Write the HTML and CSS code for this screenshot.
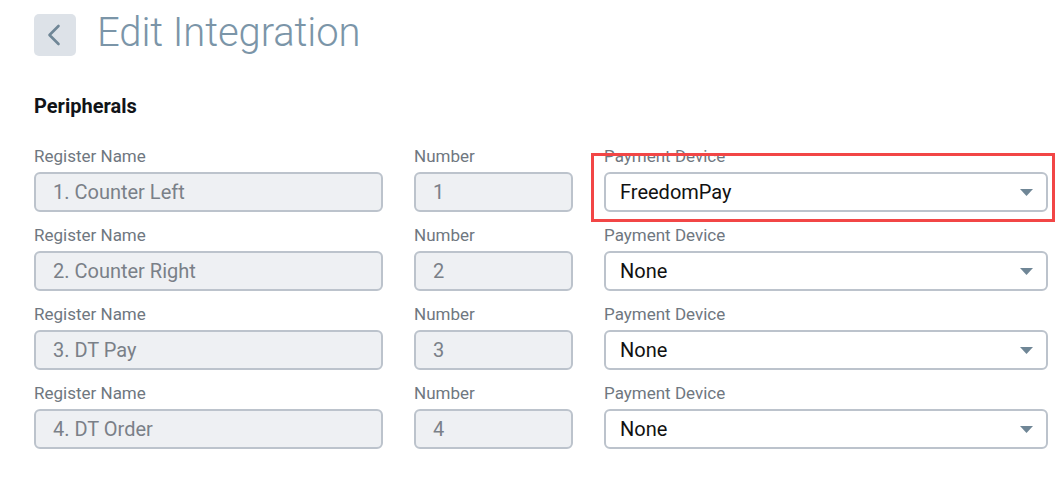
FILE: index.html
```html
<!DOCTYPE html>
<html lang="en">
<head>
<meta charset="utf-8">
<title>Edit Integration</title>
<link rel="stylesheet" href="styles.css">
</head>
<body>
<div class="page">
  <header class="header">
    <button class="back" aria-label="Back">
      <svg width="42" height="42" viewBox="0 0 42 42"><polyline points="24.5,12 15.5,21 24.5,30" fill="none" stroke="#6f8696" stroke-width="2.6" stroke-linecap="round" stroke-linejoin="round"/></svg>
    </button>
    <h1 class="title">Edit Integration</h1>
  </header>

  <h2 class="section">Peripherals</h2>

  <div class="grid">
    <div class="field">
      <label class="label">Register Name</label>
      <div class="input">1. Counter Left</div>
    </div>
    <div class="field">
      <label class="label">Number</label>
      <div class="input">1</div>
    </div>
    <div class="field pay">
      <label class="label">Payment Device</label>
      <div class="select">FreedomPay<svg class="caret" width="13" height="7" viewBox="0 0 13 7"><polygon points="0,0 13,0 6.5,7" fill="#6f8696"/></svg></div>
      <div class="highlight"></div>
    </div>

    <div class="field">
      <label class="label">Register Name</label>
      <div class="input">2. Counter Right</div>
    </div>
    <div class="field">
      <label class="label">Number</label>
      <div class="input">2</div>
    </div>
    <div class="field pay">
      <label class="label">Payment Device</label>
      <div class="select">None<svg class="caret" width="13" height="7" viewBox="0 0 13 7"><polygon points="0,0 13,0 6.5,7" fill="#6f8696"/></svg></div>
    </div>

    <div class="field">
      <label class="label">Register Name</label>
      <div class="input">3. DT Pay</div>
    </div>
    <div class="field">
      <label class="label">Number</label>
      <div class="input">3</div>
    </div>
    <div class="field pay">
      <label class="label">Payment Device</label>
      <div class="select">None<svg class="caret" width="13" height="7" viewBox="0 0 13 7"><polygon points="0,0 13,0 6.5,7" fill="#6f8696"/></svg></div>
    </div>

    <div class="field">
      <label class="label">Register Name</label>
      <div class="input">4. DT Order</div>
    </div>
    <div class="field">
      <label class="label">Number</label>
      <div class="input">4</div>
    </div>
    <div class="field pay">
      <label class="label">Payment Device</label>
      <div class="select">None<svg class="caret" width="13" height="7" viewBox="0 0 13 7"><polygon points="0,0 13,0 6.5,7" fill="#6f8696"/></svg></div>
    </div>
  </div>
</div>
</body>
</html>
```

FILE: styles.css
```css
* { box-sizing: border-box; }
html, body { margin: 0; padding: 0; background: #ffffff; }
body { font-family: Roboto, "Liberation Sans", Arial, sans-serif; }

.page { padding: 14px 34px 0 34px; }

.header {
  display: flex;
  align-items: flex-start;
  gap: 21px;
  height: 42px;
}
.back {
  width: 42px;
  height: 42px;
  padding: 0;
  border: none;
  border-radius: 5px;
  background: #dde2e8;
  display: flex;
  align-items: center;
  justify-content: center;
}
.back svg { display: block; }
.title {
  margin: 0;
  font-size: 40px;
  line-height: 38px;
  font-weight: 300;
  color: #7b95a8;
  letter-spacing: -0.1px;
}

.section {
  margin: 39px 0 0 0;
  font-size: 20px;
  line-height: 22px;
  font-weight: 700;
  color: #111418;
}

.grid {
  margin-top: 31px;
  display: grid;
  grid-template-columns: 349px 159px 444px;
  column-gap: 31px;
  row-gap: 15px;
}

.field { display: flex; flex-direction: column; }
.pay { position: relative; }

.label {
  font-size: 17px;
  line-height: 17px;
  color: #6f7780;
  margin-bottom: 7px;
}

.input {
  height: 40px;
  border: 2px solid #bcc3cc;
  border-radius: 6px;
  background: #eef0f3;
  padding: 0 17px;
  font-size: 20px;
  line-height: 36px;
  color: #7a8088;
}

.select {
  height: 40px;
  border: 2px solid #bcc3cc;
  border-radius: 6px;
  background: #ffffff;
  padding: 0 14px;
  font-size: 20px;
  line-height: 36px;
  color: #111111;
  display: flex;
  align-items: center;
  justify-content: space-between;
}
.caret { display: block; margin-right: -1px; margin-top: 1px; }

.highlight {
  position: absolute;
  left: -13px;
  top: 5px;
  width: 464px;
  height: 69px;
  border: 3px solid #f24646;
  pointer-events: none;
}
```
